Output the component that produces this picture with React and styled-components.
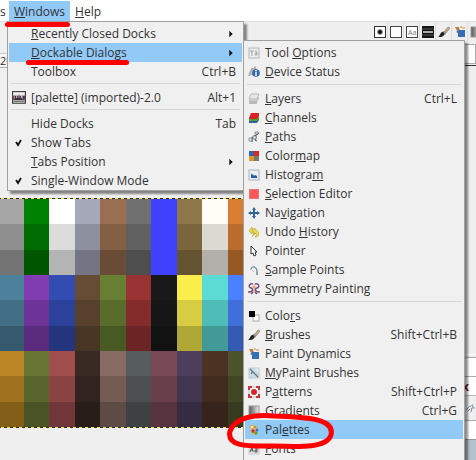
import React from 'react';
import styled, { createGlobalStyle, css } from 'styled-components';

const GlobalStyle = createGlobalStyle`
  * { box-sizing: border-box; }
  html, body, #root { min-height: 100vh; }
  body {
    margin: 0;
    background: #efefef;
    overflow: hidden;
    font: 12px/19px "Open Sans", "Noto Sans", sans-serif;
    color: #333;
  }
  button { font: inherit; color: inherit; }
`;

const Page = styled.div`
  position: relative;
  display: flex;
  flex-direction: column;
  min-height: 100vh;
`;

const MenuBar = styled.nav`
  display: flex;
  height: 21px;
  background: #fff;
`;

const MenuTitle = styled.button`
  position: relative;
  border: 0;
  margin: 1px 0 0;
  padding: ${(p) => (p.$narrow ? '0' : '0 5px')};
  width: ${(p) => (p.$narrow ? '9px' : 'auto')};
  text-align: ${(p) => (p.$narrow ? 'left' : 'center')};
  background: ${(p) => (p.$open ? '#91c9f7' : 'transparent')};
`;

const Workspace = styled.div`
  flex: 1;
  display: grid;
  grid-template-columns: minmax(0, 1fr) 105px;
  border-top: 1px solid #e0e0e0;
`;

const Canvas = styled.main`
  display: flex;
  flex-direction: column;
`;

const Ruler = styled.div`
  height: 15px;
  margin-top: 31px;
  border-top: 1px solid #ccc;
  border-bottom: 1px solid #aaa;
  background: #f8f8f8;
  font-size: 11px;
  line-height: 13px;
`;

const Swatches = styled.div`
  width: 255px;
  height: 230px;
  margin: 130px 0 0 -2px;
  padding: 1px 0;
  background: repeating-linear-gradient(90deg, #222 0 3px, #f1ed3c 3px 6px);
`;

const SwatchGrid = styled.div`
  height: 100%;
  display: grid;
  grid-template-columns: repeat(10, 1fr);
  grid-template-rows: repeat(9, 1fr);
`;

const Swatch = styled.div`
  background: ${(p) => p.$color};
`;

const Dock = styled.aside`
  display: flex;
  flex-direction: column;
  background: #efefef;
`;

const DockTabs = styled.div`
  display: flex;
  height: 20px;
  padding-left: 1px;
  overflow: hidden;
`;

const DockTab = styled.button`
  flex: none;
  display: grid;
  place-items: center;
  width: 16px;
  height: 20px;
  padding: 0;
  border: 0;
  border-right: 1px solid #dedede;
  background: transparent;
`;

const Filter = styled.input`
  height: 20px;
  margin-top: 2px;
  width: 100%;
  border: 1px solid #aaa;
  background: #fff;
`;

const BrushList = styled.div`
  height: 290px;
  margin: 1px 0 2px;
  border-top: 1px solid #333;
  border-bottom: 1px solid #fff;
`;

const DockField = styled.div`
  height: 19px;
  display: flex;
  align-items: center;
  justify-content: flex-end;
  padding-right: 7px;
  background: #fff;
  border-top: 1px solid #aaa;
`;

const CloseButton = styled.button`
  padding: 0;
  border: 0;
  background: transparent;
  color: #7d2020;
  font-weight: 700;
`;

const DockStrip = styled.div`
  display: flex;
  justify-content: flex-end;
  align-items: center;
  height: 25px;
  border-top: 1px solid #bbb;
`;

const DockFooter = styled.div`
  flex: 1;
  border-top: 1px solid #999;
  background: #b4c2cb;
`;

const Menu = styled.ul`
  position: absolute;
  z-index: ${(p) => (p.$nested ? 2 : 1)};
  top: ${(p) => (p.$nested ? 40 : 21)}px;
  left: ${(p) => (p.$nested ? 243 : 7)}px;
  width: ${(p) => (p.$nested ? 222 : 237)}px;
  margin: 0;
  padding: ${(p) => (p.$nested ? '2px 1px' : '2px 1px 0')};
  list-style: none;
  border: 1px solid #a0a0a0;
  background: #f0f0f0;
  box-shadow: 3px 3px 2px rgba(0, 0, 0, 0.45);
`;

const Item = styled.li`
  position: relative;
`;

const ItemButton = styled.button`
  display: grid;
  grid-template-columns: ${(p) => (p.$nested ? '20px' : '22px')} 1fr auto;
  align-items: center;
  width: 100%;
  height: 19px;
  padding: 0 6px 0 0;
  border: 0;
  text-align: left;
  white-space: nowrap;
  background: ${(p) => (p.$active ? '#91c9f7' : 'transparent')};
`;

const IconSlot = styled.span`
  display: flex;
  padding-left: 3px;
`;

const Separator = styled.li`
  height: 1px;
  margin: ${(p) => (p.$nested ? '3px 2px 4px' : '2px 2px 4px')};
  background: #d7d7d7;
`;

const markBase = css`
  position: absolute;
  z-index: 3;
  pointer-events: none;
`;

const Underline = styled.span`
  ${markBase}
  left: ${(p) => p.$left}px;
  right: ${(p) => p.$right}px;
  bottom: ${(p) => p.$bottom}px;
  height: 5px;
  border-radius: 3px;
  background: #fe0000;
`;

const Ring = styled.svg`
  ${markBase}
  left: -20px;
  top: -10px;
`;

const icons = {
  options: <><rect x="1" y="1" width="10" height="10" fill="#eee" stroke="#b5b5b5" /><path d="M3 3v2h2V3M4 5v4M8 3v6M7 8l2-3v3" fill="none" stroke="#a5a5a5" /></>,
  device: <><path d="M1 10 3 5 5 2M4 9l3-7 1 2" fill="none" stroke="#aaa" strokeWidth="2" /><circle cx="8" cy="7" r="3.8" fill="#3467a8" /><path d="M8 4v1.5M8 6v4" stroke="#fff" strokeWidth="1.4" /></>,
  layers: <><path d="m1 9 2-4h8l-2 4v2H1z" fill="#bbb" /><path d="m1 8 2-3h8L9 8z" fill="#ddd" stroke="#aaa" strokeWidth=".5" /><path d="m1 6 2-5h8L9 6z" fill="#e9e9e9" stroke="#aaa" strokeWidth=".8" /></>,
  channels: <><path d="M1 8h8l2-3v3l-2 3H1z" fill="#3b5fa0" /><path d="M1 6h8l2-2v3L9 9H1z" fill="#48a330" /><path d="m1 6 2-5h8v3L9 7H1z" fill="#dc2027" /></>,
  paths: <><path d="M1 9 11 2M4 11C3 6 8 3 8 6s-2 3 1 4" fill="none" stroke="#4b5660" strokeWidth="1.1" /><path d="M1 7h3v3H1zM5 5h3v3H5zM7 1h3v2H7z" fill="#e8eef2" stroke="#64717b" strokeWidth=".7" /></>,
  colormap: <><path d="M1 1h5v5H1z" fill="#3465b0" /><path d="M6 1h5v5H6z" fill="#dd2720" /><path d="M1 6h5v5H1z" fill="#d99a20" /><path d="M6 6h5v5H6z" fill="#777" /></>,
  histogram: <><rect x="1" y="1" width="10" height="10" fill="#e9edf1" stroke="#aab3bd" /><path d="M3 9V4l1 2 1-1 1 2 1-1 2 1v2z" fill="#245eaa" /></>,
  selection: <rect x="1.5" y="1.5" width="9" height="9" fill="#ff5757" stroke="#e77777" />,
  navigation: <path d="m6 0 2 3H7v2h2V4l3 2-3 2V7H7v2h1l-2 3-2-3h1V7H3v1L0 6l3-2v1h2V3H4z" fill="#35629b" />,
  undo: <><path d="M1 5 4 1v2c4 0 4 7 0 7 2-2 2-3 0-4v2z" fill="#e6d64c" stroke="#b5a329" strokeWidth=".6" /><path d="m4 4 3-2v2c5 0 5 8 0 7 2-2 2-3 0-4v1z" fill="#eadb59" stroke="#ad9926" strokeWidth=".6" /></>,
  pointer: <path d="M3 1v8l2-1 1 3 2-1-1-3h2z" fill="#fff" stroke="#333" />,
  sample: <><path d="M3 6c0-5 6-4 6 2" fill="none" stroke="#7290a6" strokeWidth="1.3" /><path d="m3 5 3 3" stroke="#bac7ce" /><path d="M8 8h2v3H8z" fill="#8aa3b5" /></>,
  symmetry: <><path d="M5 1C1 0 0 4 3 5s2 4-3 4M3 11l2-2M7 1c4-1 5 3 2 4s-2 4 3 4M9 11 7 9" fill="none" stroke="#76517c" strokeWidth="1.5" /><path d="M6 1v9M4 4h4" stroke="#dc9871" /></>,
  colors: <><rect x="5" y="5" width="6" height="6" fill="#fff" stroke="#aaa" /><path d="M1 1h6v6H1z" fill="#000" /></>,
  brush: <><path d="m6 6 4-5 2 1-4 5z" fill="#c8a982" stroke="#777" strokeWidth=".6" /><path d="m5 5 3 2-1 2-4-1z" fill="#888" /><path d="M4 6c2 0 3 2 2 3-1 2-3 2-6 2 2-1 2-4 4-5" fill="#222" /></>,
  dynamics: <><path d="M1 1h4l1 4H3z" fill="#b78148" /><path d="M5 4h6v7H4V7L2 6z" fill="#356fb1" /><path d="M6 1h2M8 2h3" stroke="#c78b55" /></>,
  mypaint: <><rect x="1" y="1" width="10" height="10" fill="#cbdbe8" stroke="#c4c6c7" /><path d="m2 2 8 8M3 7l2-3" stroke="#5b7487" strokeWidth="1.2" /><path d="M7 2h3v3" fill="none" stroke="#eff5f9" /></>,
  patterns: <><rect x="1" y="1" width="10" height="10" fill="#fff" stroke="#bbb" /><path d="M1 4V1h3M8 1h3v3M11 8v3H8M4 11H1V8" fill="none" stroke="#c8303b" strokeWidth="2" /><circle cx="6" cy="6" r="3" fill="#d9202b" /></>,
  gradients: <><defs><linearGradient id="grayGradient"><stop stopColor="#555" /><stop offset="1" stopColor="#eee" /></linearGradient></defs><rect x="1" y="1" width="10" height="10" fill="url(#grayGradient)" stroke="#999" /></>,
  palettes: <><path d="M1 2c3-2 9-1 9 2 0 2-2 2-2 4 0 3-4 4-5 1 2-3-2-4-2-7" fill="#d8b56b" /><circle cx="4" cy="3" r="1" fill="#fff" /><circle cx="7" cy="3" r="1" fill="#b38841" /><circle cx="5" cy="7" r="1.7" fill="#df2929" /><circle cx="9" cy="6" r="1.5" fill="#307ccd" /><circle cx="8" cy="9" r="1.7" fill="#58a832" /></>,
  fonts: <><rect x="1" y="1" width="10" height="10" fill="#ddd" stroke="#ccc" /><path d="m2 9 2-5 1 5M3 7h2M7 5h2v4H7V7h2" fill="none" stroke="#555" /></>,
  image: <><rect x=".5" y=".5" width="11" height="10" fill="#eee" stroke="#444" /><path d="M1 4h10v4H1z" fill="#33323f" /><path d="M2 4v3M6 3v3M9 4v3" stroke="#b77a8b" /><path d="M4 4v2M8 3v3" stroke="#eee" strokeWidth=".7" /><path d="M1 9h10" stroke="#777" /></>,
  check: <path d="m4 5 2 3 3-5" fill="none" stroke="#111" strokeWidth="1.8" />,
  arrow: <path d="m4 2 4 4-4 4z" fill="#111" />,
  dot: <><defs><radialGradient id="softDot"><stop offset=".3" /><stop offset="1" stopColor="#fff" /></radialGradient></defs><rect x=".5" y=".5" width="11" height="11" fill="#fff" stroke="#333" /><circle cx="6" cy="6" r="3.5" fill="url(#softDot)" /></>,
  blank: <rect x=".5" y=".5" width="11" height="11" fill="#fff" stroke="#444" />,
  letters: <><rect x=".5" y=".5" width="11" height="11" fill="#fff" stroke="#444" /><text x="2" y="9" fontSize="7" fill="#777">Aa</text></>,
  band: <><path d="M0 0h12v12H0z" fill="#151515" /><path d="M1 5h10v2H1z" fill="#aaa" /><path d="M0 3h12M0 9h12" stroke="#555" /></>,
  tool: <path d="M0 9 4 4h2l2-2v3l2 1H7l-1 5M2 10l3-3" fill="none" stroke="#8494a3" strokeWidth="1.2" />,
};

const Glyph = ({ name, size = 12 }) => (
  <svg width={size} height={size} viewBox="0 0 12 12" aria-hidden="true">{icons[name]}</svg>
);

const Label = ({ text }) => {
  const [before, key, after] = text.split('_');
  return <span>{before}{key && <u>{key}</u>}{after}</span>;
};

const windowsItems = [
  ['_R_ecently Closed Docks', null, null, 'more'],
  ['_D_ockable Dialogs', null, null, 'more', 'active', 'underline'],
  ['Toolbox', null, 'Ctrl+B'],
  null,
  ['[palette] (imported)-2.0', 'image', 'Alt+1'],
  null,
  ['Hide Docks', null, 'Tab'],
  ['Show Tabs', 'check'],
  ['_T_abs Position', null, null, 'more'],
  ['Single-Window Mode', 'check'],
];

const dialogItems = [
  ['Tool _O_ptions', 'options'],
  ['_D_evice Status', 'device'],
  null,
  ['_L_ayers', 'layers', 'Ctrl+L'],
  ['_C_hannels', 'channels'],
  ['_P_aths', 'paths'],
  ['Color_m_ap', 'colormap'],
  ['Histogra_m_', 'histogram'],
  ['_S_election Editor', 'selection'],
  ['Na_v_igation', 'navigation'],
  ['Undo _H_istory', 'undo'],
  ['Pointer', 'pointer'],
  ['_S_ample Points', 'sample'],
  ['_S_ymmetry Painting', 'symmetry'],
  null,
  ['Colo_r_s', 'colors'],
  ['_B_rushes', 'brush', 'Shift+Ctrl+B'],
  ['Paint Dynamics', 'dynamics'],
  ['_M_yPaint Brushes', 'mypaint'],
  ['P_a_tterns', 'patterns', 'Shift+Ctrl+P'],
  ['_G_radients', 'gradients', 'Ctrl+G'],
  ['Pal_e_ttes', 'palettes', null, null, 'active', 'ring'],
  ['_F_onts', 'fonts'],
];

const MenuList = ({ items, nested }) => (
  <Menu $nested={nested} role="menu">
    {items.map((item, i) => {
      if (!item) return <Separator key={i} $nested={nested} role="separator" />;
      const [text, icon, shortcut, more, active, mark] = item;
      return (
        <Item key={text} role="none">
          <ItemButton role="menuitem" $nested={nested} $active={active}>
            <IconSlot>{icon && <Glyph name={icon} size={icon === 'image' ? 14 : 12} />}</IconSlot>
            <Label text={text} />
            {more ? <Glyph name="arrow" size={10} /> : <span>{shortcut}</span>}
          </ItemButton>
          {mark === 'underline' && <Underline $left={17} $right={113} $bottom={-3} />}
          {mark === 'ring' && (
            <Ring width="112" height="42" viewBox="0 0 112 42" aria-hidden="true">
              <path d="M49 6C28 4 10 8 5 21c-4 17 22 15 43 15 28 1 54 2 58-11 4-16-22-18-58-19" fill="none" stroke="#fe0000" strokeWidth="5" strokeLinecap="round" />
            </Ring>
          )}
        </Item>
      );
    })}
  </Menu>
);

const swatchRows = [
  ['#a6a6a6', '#008000', '#ffffff', '#a5a8b9', '#9a6e50', '#707070', '#4040ff', '#8e7748', '#fffcf5', '#d97e33'],
  ['#8f8f8f', '#006b00', '#dcdcdc', '#8d909f', '#835f44', '#606060', '#4040ff', '#7a653d', '#dcd9d3', '#bb6c2c'],
  ['#747474', '#005600', '#b4b4b4', '#737682', '#6a4c36', '#4e4e4e', '#4040ff', '#635331', '#b3b0ab', '#985824'],
  ['#4d809b', '#803cb0', '#334cb2', '#664c33', '#667f33', '#993333', '#191919', '#faee4d', '#5cdbd5', '#4a80ff'],
  ['#426e85', '#6e3397', '#2c4199', '#58412c', '#586d2c', '#842c2c', '#161616', '#d7cc42', '#4fbcb7', '#406edb'],
  ['#365a6d', '#5a2a7c', '#24357d', '#483624', '#485a24', '#6c2424', '#121212', '#b0a836', '#419a96', '#345ab4'],
  ['#ba8524', '#677535', '#a04d4e', '#392923', '#876b62', '#575c5c', '#7a4958', '#4c3e5c', '#4c3223', '#4c522a'],
  ['#a0721f', '#58652e', '#8a4243', '#31231e', '#745c54', '#4b4f4f', '#693f4b', '#41354f', '#412b1e', '#414624'],
  ['#835e19', '#495325', '#713637', '#281d19', '#5f4b45', '#3d4141', '#56333e', '#362c41', '#362319', '#363a1e'],
];

export default function App() {
  return (
    <Page>
      <GlobalStyle />
      <MenuBar>
        <MenuTitle $narrow>s</MenuTitle>
        <MenuTitle $open>
          <Label text="_W_indows" />
          <Underline $left={-4} $right={0} $bottom={-6} />
        </MenuTitle>
        <MenuTitle><Label text="_H_elp" /></MenuTitle>
      </MenuBar>
      <Workspace>
        <Canvas>
          <Ruler>20</Ruler>
          <Swatches>
            <SwatchGrid>
              {swatchRows.flat().map((color, i) => <Swatch key={i} $color={color} />)}
            </SwatchGrid>
          </Swatches>
        </Canvas>
        <Dock>
          <DockTabs>
            {['dot', 'blank', 'letters', 'band', 'brush', 'dynamics', 'gradients'].map((name) => (
              <DockTab key={name} aria-label={name}><Glyph name={name} /></DockTab>
            ))}
          </DockTabs>
          <Filter aria-label="Filter" />
          <BrushList />
          <DockField />
          <DockField><CloseButton aria-label="Close">x</CloseButton></DockField>
          <DockStrip><Glyph name="tool" size={10} /></DockStrip>
          <DockField />
          <DockFooter />
        </Dock>
      </Workspace>
      <MenuList items={windowsItems} />
      <MenuList items={dialogItems} nested />
    </Page>
  );
}
